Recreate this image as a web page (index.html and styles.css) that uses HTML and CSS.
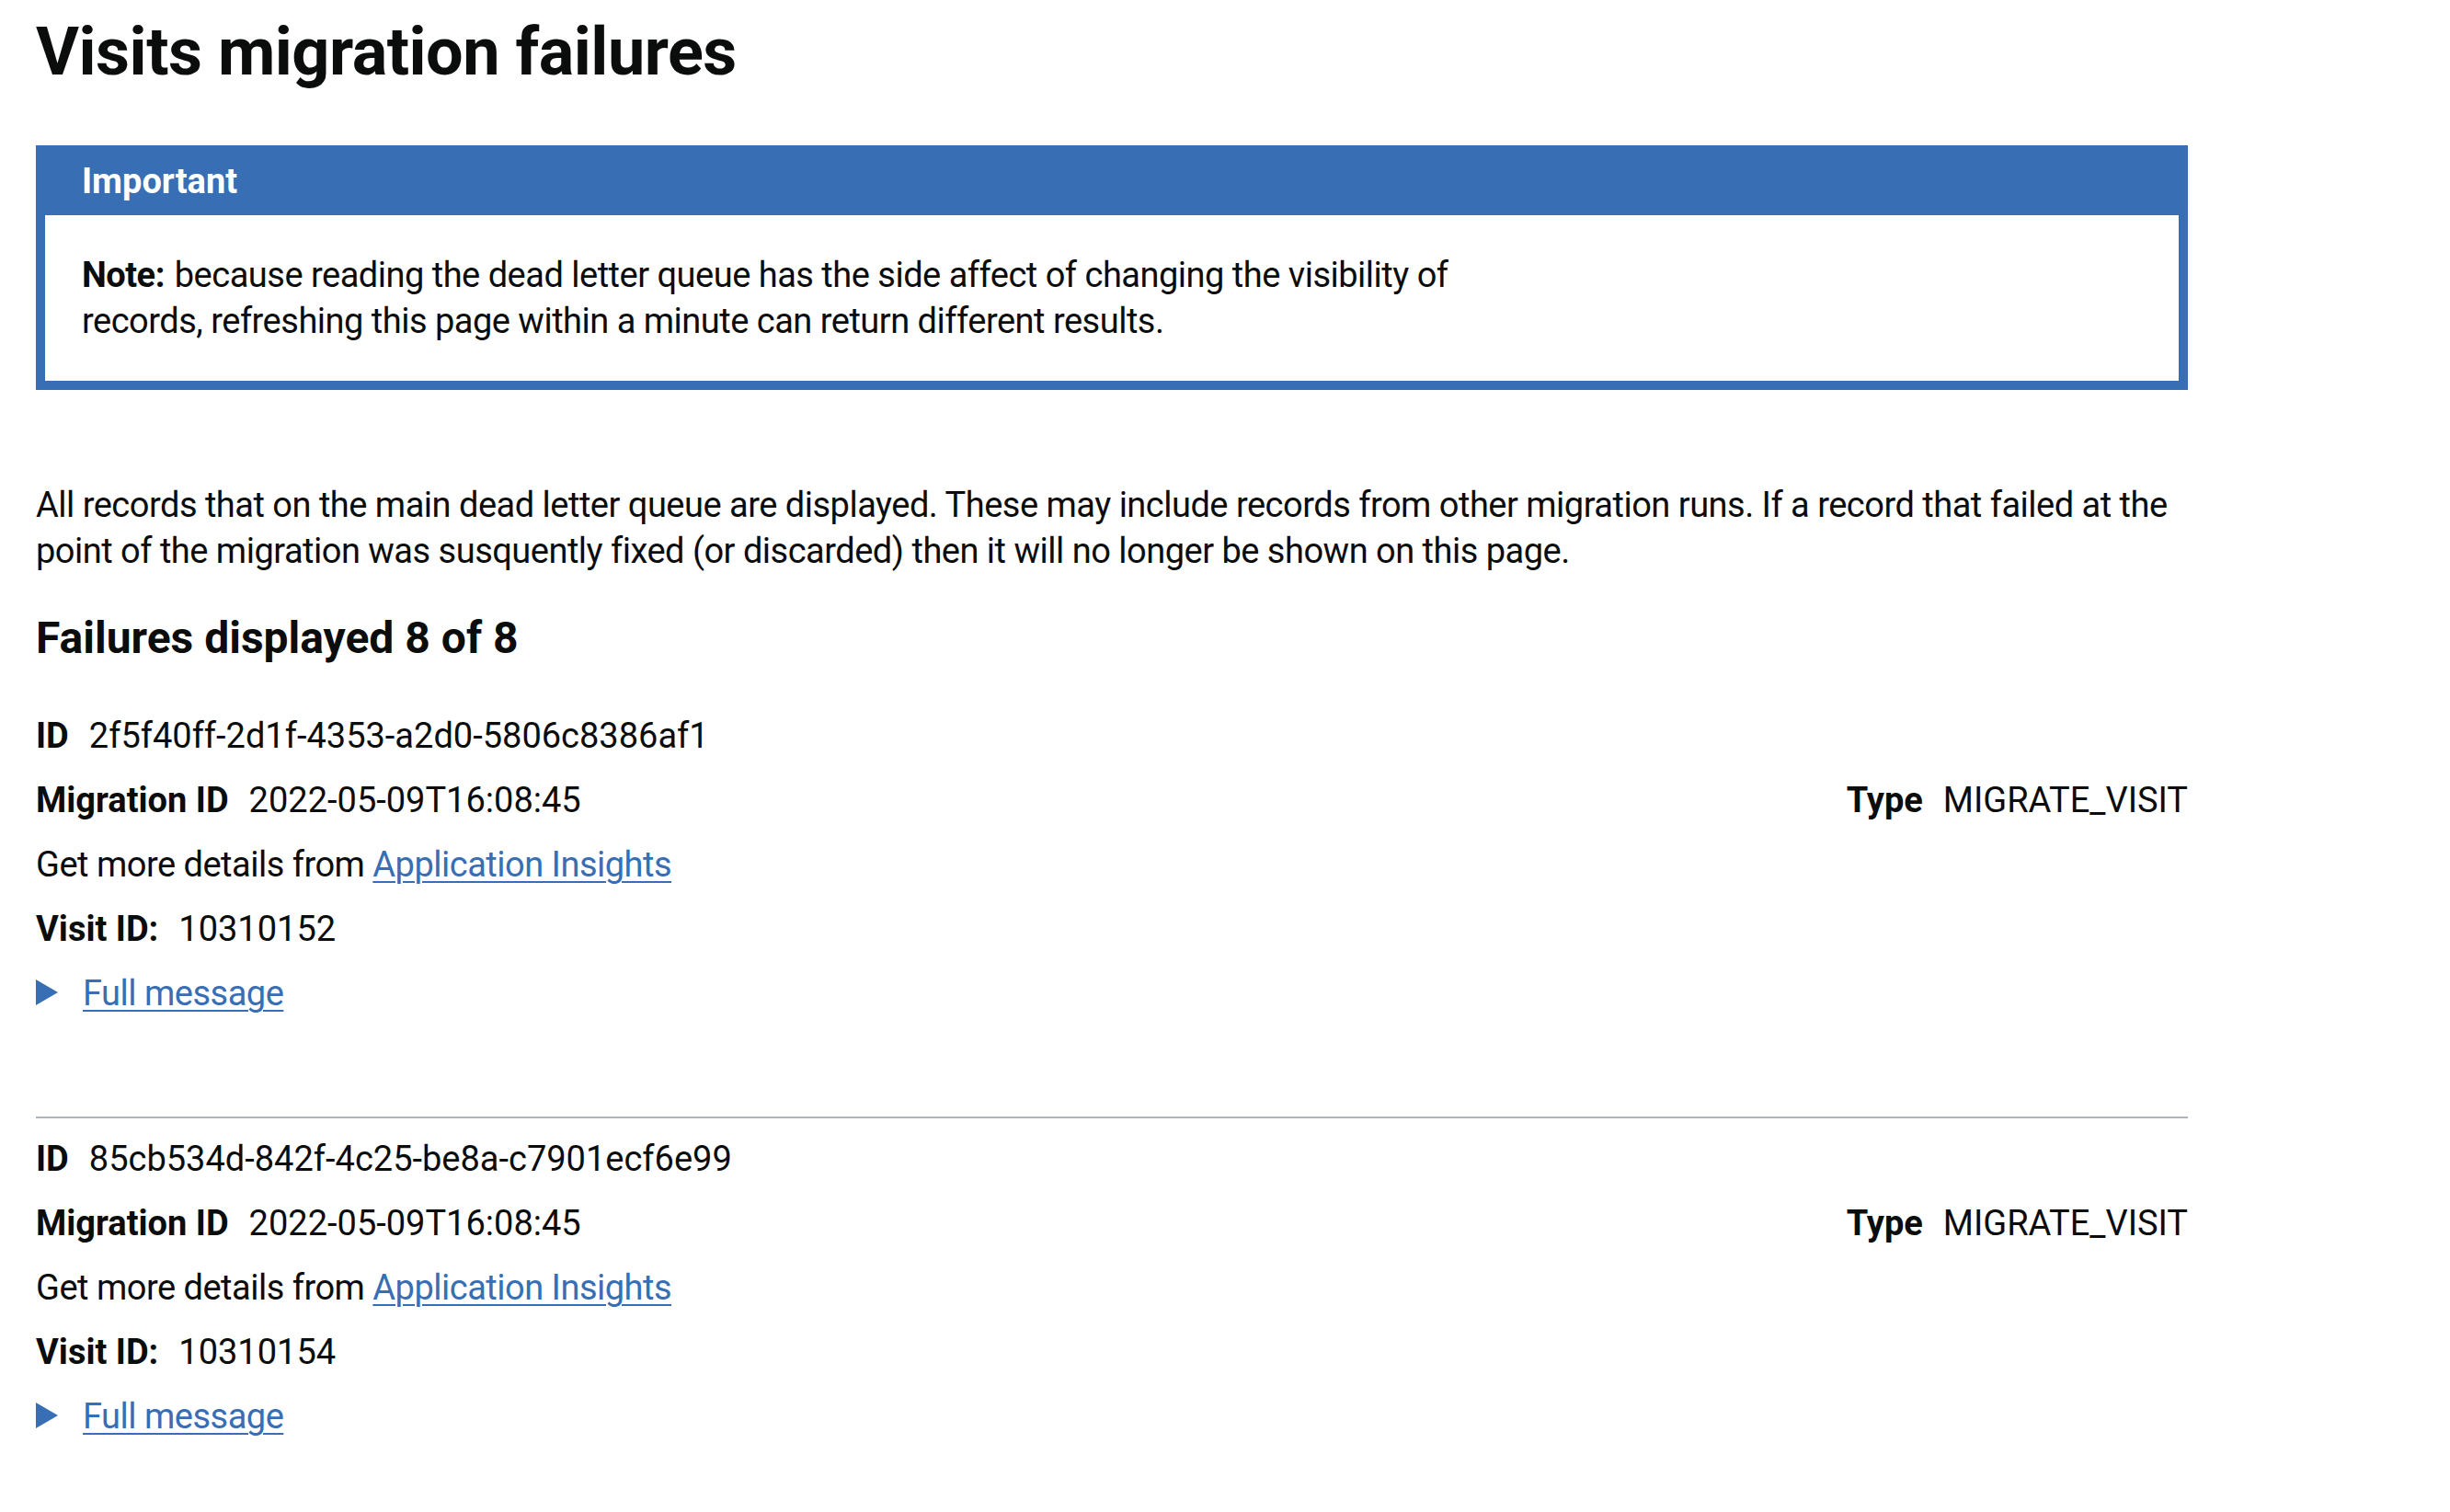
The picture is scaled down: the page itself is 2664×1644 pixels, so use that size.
FILE: index.html
```html
<!DOCTYPE html>
<html lang="en">
<head>
<meta charset="utf-8">
<title>Visits migration failures</title>
<link rel="stylesheet" href="styles.css">
</head>
<body>
<main class="page">
  <h1 class="title">Visits migration failures</h1>

  <div class="banner" role="region" aria-labelledby="banner-title">
    <div class="banner-header">
      <h2 class="banner-title" id="banner-title">Important</h2>
    </div>
    <div class="banner-content">
      <p class="banner-text prose"><strong>Note:</strong> because reading the dead letter queue has the side affect of changing the visibility of records, refreshing this page within a minute can return different results.</p>
    </div>
  </div>

  <p class="body prose">All records that on the main dead letter queue are displayed. These may include records from other migration runs. If a record that failed at the point of the migration was susquently fixed (or discarded) then it will no longer be shown on this page.</p>

  <h2 class="heading-m">Failures displayed 8 of 8</h2>

  <div class="record">
    <div class="row"><span class="label">ID</span><span class="value">2f5f40ff-2d1f-4353-a2d0-5806c8386af1</span></div>
    <div class="row row-split">
      <div class="pair"><span class="label">Migration ID</span><span class="value">2022-05-09T16:08:45</span></div>
      <div class="pair"><span class="label">Type</span><span class="value">MIGRATE_VISIT</span></div>
    </div>
    <p class="row prose">Get more details from <a class="link" href="#">Application Insights</a></p>
    <div class="row"><span class="label">Visit ID:</span><span class="value">10310152</span></div>
    <details class="details">
      <summary class="summary"><span class="summary-text prose">Full message</span></summary>
      <pre class="message">{ "type": "MIGRATE_VISIT" }</pre>
    </details>
  </div>

  <hr class="separator">

  <div class="record">
    <div class="row"><span class="label">ID</span><span class="value">85cb534d-842f-4c25-be8a-c7901ecf6e99</span></div>
    <div class="row row-split">
      <div class="pair"><span class="label">Migration ID</span><span class="value">2022-05-09T16:08:45</span></div>
      <div class="pair"><span class="label">Type</span><span class="value">MIGRATE_VISIT</span></div>
    </div>
    <p class="row prose">Get more details from <a class="link" href="#">Application Insights</a></p>
    <div class="row"><span class="label">Visit ID:</span><span class="value">10310154</span></div>
    <details class="details">
      <summary class="summary"><span class="summary-text prose">Full message</span></summary>
      <pre class="message">{ "type": "MIGRATE_VISIT" }</pre>
    </details>
  </div>
</main>
</body>
</html>
```

FILE: styles.css
```css
html, body {
  margin: 0;
  padding: 0;
  background: #ffffff;
}

body {
  font-family: Roboto, "Liberation Sans", Arial, sans-serif;
  color: #0b0c0c;
  font-size: 38px;
  line-height: 50px;
}

.page {
  width: 2340px;
  padding: 17px 0 40px 39px;
}

.prose {
  letter-spacing: -0.5px;
}

.title {
  margin: 0 0 61px;
  font-size: 72px;
  line-height: 80px;
  font-weight: 700;
  letter-spacing: -0.5px;
}

.banner {
  border: 10px solid #386eb4;
  background: #386eb4;
  margin: 0 0 100px;
}

.banner-header {
  padding: 4px 40px 12px;
}

.banner-title {
  margin: 0;
  font-size: 38px;
  line-height: 50px;
  font-weight: 700;
  color: #ffffff;
}

.banner-content {
  background: #ffffff;
  padding: 40px;
}

.banner-text {
  margin: 0;
  max-width: 1560px;
}

.banner-text strong {
  font-weight: 700;
  margin-right: 2px;
}

.body {
  margin: 0 0 40px;
}

.heading-m {
  margin: 0 0 51px;
  font-size: 48px;
  line-height: 60px;
  font-weight: 700;
}

.row {
  margin: 0 0 20px;
  display: flex;
  align-items: baseline;
}

.row-split {
  justify-content: space-between;
}

.pair {
  display: flex;
  align-items: baseline;
}

.label {
  font-weight: 700;
  margin-right: 22px;
}

p.row {
  display: block;
}

.link {
  color: #386eb4;
  text-decoration: underline;
  text-decoration-thickness: 2px;
  text-underline-offset: 5px;
}

.details {
  margin: 0;
}

.summary {
  display: flex;
  align-items: flex-start;
  list-style: none;
  cursor: pointer;
  color: #386eb4;
}

.summary::-webkit-details-marker {
  display: none;
}

.summary::before {
  content: "";
  display: block;
  width: 0;
  height: 0;
  margin: 10px 27px 0 0;
  border-style: solid;
  border-width: 14px 0 14px 24px;
  border-color: transparent transparent transparent #386eb4;
}

.summary-text {
  text-decoration: underline;
  text-decoration-thickness: 2px;
  text-underline-offset: 5px;
}

.message {
  margin: 20px 0 0;
  font-family: "Liberation Mono", monospace;
  font-size: 28px;
}

.separator {
  margin: 109px 0 19px;
  border: 0;
  border-top: 2px solid #b1b4b6;
  height: 0;
}
```
